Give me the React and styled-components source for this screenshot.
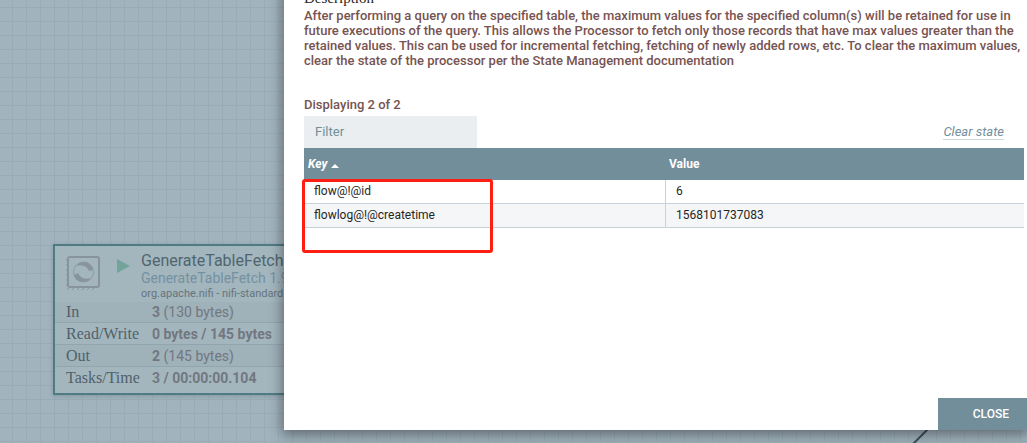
import React from "react";
import styled, { createGlobalStyle } from "styled-components";

const GlobalStyle = createGlobalStyle`
  * { box-sizing: border-box; }
  body {
    margin: 0;
    font-family: Roboto, "Liberation Sans", sans-serif;
    font-size: 13px;
  }
`;

const Canvas = styled.main`
  position: relative;
  height: 100vh;
  overflow: hidden;
  background-color: #a1b3bd;
  background-image:
    linear-gradient(to right, #99acb5 1px, transparent 1px),
    linear-gradient(to bottom, #99acb5 1px, transparent 1px);
  background-size: 14px 14px;
  background-position: 12px 7px;
`;

const Processor = styled.section`
  position: absolute;
  left: 53px;
  top: 244px;
  width: 352px;
  padding-bottom: 4px;
  border: 2px solid #517b83;
  background: #a3b6be;
  box-shadow: 0 1px 4px rgba(60, 85, 95, 0.3);
`;

const ProcessorHeader = styled.header`
  display: flex;
  height: 56px;
  padding: 6px 10px 0 11px;
`;

const RunIcon = styled.svg`
  margin: 7px 10px 0 17px;
`;

const Titles = styled.div`
  white-space: nowrap;
`;

const Name = styled.div`
  font-size: 16px;
  line-height: 18px;
  color: #50656f;
`;

const Type = styled.div`
  font-size: 14px;
  line-height: 16px;
  color: #7391a0;
`;

const Bundle = styled.div`
  font-size: 11px;
  line-height: 16px;
  color: #66747d;
`;

const Stats = styled.table`
  width: 100%;
  border-spacing: 0;
  color: #737780;
  font-size: 14px;
`;

const StatRow = styled.tr`
  background: ${(p) => (p.$shaded ? "#9fb1b9" : "transparent")};
  & > * { border-bottom: 1px solid #92a5af; }
  &:last-child > * { border-bottom: 0; }
`;

const StatLabel = styled.th`
  width: 97px;
  height: 21px;
  padding: 0 0 0 11px;
  font: 400 16px/20px "Roboto Slab", "Liberation Serif", serif;
  color: #50616b;
  text-align: left;
  tr:nth-child(n + 2) > & { height: 22px; }
`;

const StatValue = styled.td`
  padding: 0;
  line-height: 20px;
`;

const Connection = styled.svg`
  position: absolute;
  right: 97px;
  bottom: 0;
`;

const Dialog = styled.div`
  position: absolute;
  top: -12px;
  right: 0;
  bottom: 13px;
  left: 284px;
  display: flex;
  flex-direction: column;
  background: #fff;
  box-shadow: 0 3px 12px 2px rgba(0, 0, 0, 0.4);
`;

const DialogContent = styled.div`
  flex: 1;
  padding: 0 3px 0 20px;
`;

const Label = styled.div`
  font: 400 15px/20px "Roboto Slab", "Liberation Serif", serif;
  color: #262626;
`;

const Description = styled.p`
  margin: 0 0 28px;
  font-weight: 500;
  line-height: 15px;
  color: #775351;
`;

const Count = styled.div`
  height: 20px;
  font-weight: 500;
  line-height: 17px;
  color: #775351;
`;

const Toolbar = styled.div`
  display: flex;
  justify-content: space-between;
  align-items: center;
`;

const Filter = styled.input`
  width: 173px;
  height: 32px;
  padding: 0 11px 2px;
  border: 0;
  border-radius: 0;
  background: #eaeef0;
  font: 400 13px Roboto, sans-serif;
  color: #728e9b;
  &::placeholder { color: #728e9b; opacity: 1; }
`;

const ClearLink = styled.a`
  margin-right: 20px;
  border-bottom: 1px solid #ccdadb;
  font-style: italic;
  line-height: 15px;
  color: #728e9b;
  text-decoration: none;
`;

const TableArea = styled.div`
  position: relative;
`;

const StateTable = styled.table`
  width: 100%;
  table-layout: fixed;
  border-spacing: 0;
`;

const HeadCell = styled.th`
  width: ${(p) => p.$width || "auto"};
  height: 32px;
  padding: 0 4px 1px;
  background: #728e9b;
  font-size: 12px;
  font-weight: 700;
  font-style: ${(p) => (p.$sorted ? "italic" : "normal")};
  color: #fff;
  text-align: left;
`;

const SortArrow = styled.svg`
  margin-left: 4px;
`;

const BodyRow = styled.tr`
  background: ${(p) => (p.$shaded ? "#f4f6f7" : "#fff")};
`;

const Cell = styled.td`
  height: 24px;
  padding: 0 10px 2px;
  border-bottom: 1px solid #c7d2d7;
  font-size: 12px;
  color: #262626;
  & + & { border-left: 1px solid #c7d2d7; }
`;

const Highlight = styled.div`
  position: absolute;
  top: 31px;
  left: -2px;
  width: 191px;
  height: 74px;
  border: 3px solid #ff1e12;
  border-radius: 3px;
  pointer-events: none;
`;

const CloseButton = styled.button`
  align-self: flex-end;
  height: 32px;
  padding: 0 18px 1px 35px;
  border: 0;
  background: #728e9b;
  font: 500 12px Roboto, sans-serif;
  color: #fff;
  text-transform: uppercase;
`;

const stats = [
  { label: "In", strong: "3", rest: " (130 bytes)", shaded: true },
  { label: "Read/Write", strong: "0 bytes / 145 bytes", rest: "" },
  { label: "Out", strong: "2", rest: " (145 bytes)", shaded: true },
  { label: "Tasks/Time", strong: "3 / 00:00:00.104", rest: "" },
];

const entries = [
  { key: "flow@!@id", value: "6" },
  { key: "flowlog@!@createtime", value: "1568101737083" },
];

function ProcessorIcon() {
  return (
    <svg width="34" height="38" viewBox="0 0 34 38" fill="none">
      <rect x="2" y="5" width="31" height="30" rx="2" stroke="#87949c" strokeWidth="2" />
      <path
        d="M1 7v2M1 12v2M1 17v2M1 22v2M1 27v2M1 32v2M1 38l3-3M6 38l3-3M11 38l3-3M16 38l3-3M21 38l3-3M26 38l3-3"
        stroke="#87949c"
      />
      <circle cx="17.500" cy="20" r="10" stroke="#8d9aa2" />
      <path d="M10 14C15 8 25 9 27 18L23 19C21 14 16 12 10 14Z" fill="#87949c" />
      <path d="M25 26C20 32 10 31 8 23L12 21C14 26 19 28 25 26Z" fill="#87949c" />
    </svg>
  );
}

export default function App() {
  return (
    <>
      <GlobalStyle />
      <Canvas>
        <Processor>
          <ProcessorHeader>
            <ProcessorIcon />
            <RunIcon width="14" height="14" viewBox="0 0 14 14">
              <path d="M0 0L13 7L0 14Z" fill="#72a49c" />
            </RunIcon>
            <Titles>
              <Name>GenerateTableFetch</Name>
              <Type>GenerateTableFetch 1.9</Type>
              <Bundle>org.apache.nifi - nifi-standard</Bundle>
            </Titles>
          </ProcessorHeader>
          <Stats>
            <tbody>
              {stats.map((s) => (
                <StatRow key={s.label} $shaded={s.shaded}>
                  <StatLabel scope="row">{s.label}</StatLabel>
                  <StatValue>
                    <b>{s.strong}</b>
                    {s.rest}
                  </StatValue>
                </StatRow>
              ))}
            </tbody>
          </Stats>
        </Processor>
        <Connection width="18" height="14" viewBox="0 0 18 14">
          <path d="M1 15L16 0" stroke="#3f505b" strokeWidth="2" />
        </Connection>
        <Dialog role="dialog" aria-label="Component state">
          <DialogContent>
            <Label>Description</Label>
            <Description>
              After performing a query on the specified table, the maximum values for the specified
              column(s) will be retained for use in future executions of the query. This allows the
              Processor to fetch only those records that have max values greater than the retained
              values. This can be used for incremental fetching, fetching of newly added rows, etc.
              To clear the maximum values, clear the state of the processor per the State Management
              documentation
            </Description>
            <Count>Displaying 2 of 2</Count>
            <Toolbar>
              <Filter type="text" placeholder="Filter" aria-label="Filter" />
              <ClearLink href="#clear">Clear state</ClearLink>
            </Toolbar>
            <TableArea>
              <StateTable>
                <thead>
                  <tr>
                    <HeadCell $width="361px" $sorted scope="col">
                      Key
                      <SortArrow width="8" height="4" viewBox="0 0 8 4">
                        <path d="M0 4L4 0L8 4Z" fill="#fff" />
                      </SortArrow>
                    </HeadCell>
                    <HeadCell scope="col">Value</HeadCell>
                  </tr>
                </thead>
                <tbody>
                  {entries.map((e, i) => (
                    <BodyRow key={e.key} $shaded={i % 2 === 1}>
                      <Cell>{e.key}</Cell>
                      <Cell>{e.value}</Cell>
                    </BodyRow>
                  ))}
                </tbody>
              </StateTable>
              <Highlight />
            </TableArea>
          </DialogContent>
          <CloseButton type="button">Close</CloseButton>
        </Dialog>
      </Canvas>
    </>
  );
}
